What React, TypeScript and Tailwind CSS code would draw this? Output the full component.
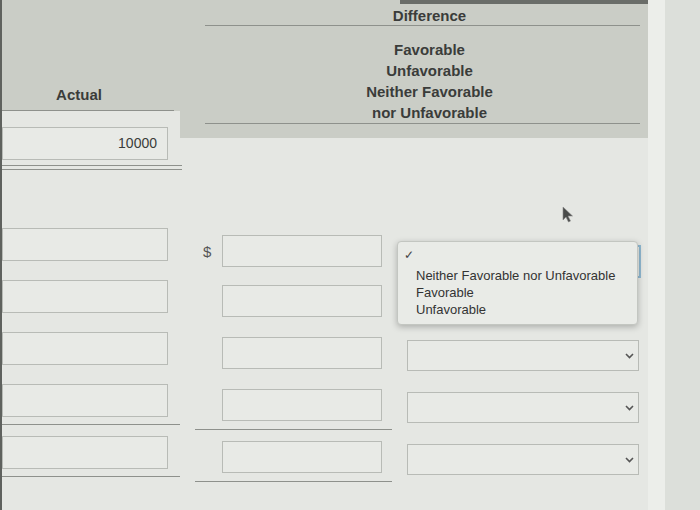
import React from 'react';

const font = { fontFamily: '"Liberation Sans", Arial, sans-serif' };

function Field({ w, h, className = '', children }: { w: string; h: string; className?: string; children?: React.ReactNode }) {
    return (
        <div className={`${w} ${h} ${className} border border-[#b8bbb6] bg-[#e8eae6] flex items-center justify-end pr-[10px] text-[14px] text-[#3a3c3a]`}>
            {children}
        </div>
    );
}

function Chevron() {
    return (
        <svg width="9" height="6" viewBox="0 0 9 6" className="mr-[4px]">
            <polyline points="1,1 4.5,4.5 8,1" fill="none" stroke="#555" strokeWidth="1.6" />
        </svg>
    );
}

function Row({ first, dollar, underline, select }: { first?: boolean; dollar?: boolean; underline?: boolean; select?: 'open' | 'closed' }) {
    return (
        <div className="flex h-[52px] items-start">
            <div className={`w-[178px] ${underline ? 'h-[41px] border-b border-[#8e918c]' : ''}`}>
                <Field w="w-[166px]" h="h-[33px]" />
            </div>
            <div className={`ml-[15px] w-[197px] flex items-start ${underline ? 'h-[46px] border-b border-[#8e918c]' : ''}`}>
                <div className="w-[27px] pt-[13px] pl-[8px] text-[15px] text-[#555]">{dollar ? '$' : ''}</div>
                <Field w="w-[160px]" h="h-[32px]" className={first ? 'mt-[7px]' : 'mt-[5px]'} />
            </div>
            {select === 'open' && (
                <div className="ml-[15px] mt-[17px] w-[234px] h-[33px] border-2 border-[#8fb8d0] bg-[#e8eae6]" />
            )}
            {select === 'closed' && (
                <div className="ml-[15px] mt-[8px] w-[232px] h-[31px] border border-[#b8bbb6] bg-[#e8eae6] flex items-center justify-end">
                    <Chevron />
                </div>
            )}
        </div>
    );
}

export default function App() {
    return (
        <div className="relative w-[700px] h-[510px] flex bg-[#e5e7e3] overflow-hidden" style={font}>
            <div className="w-[648px] h-full flex flex-col border-l-2 border-[#5f625e]">
                <div className="flex items-start">
                    <div className="w-[178px] flex flex-col">
                        <div className="h-[111px] bg-[#cacdc6] flex items-end">
                            <div className="w-[172px] border-b border-[#8e918c] pb-[6px] pr-[18px] text-center text-[15px] font-bold leading-[18px] text-[#3a3c3a]">
                                Actual
                            </div>
                        </div>
                        <div className="mt-[16px]">
                            <Field w="w-[166px]" h="h-[33px]">10000</Field>
                        </div>
                        <div className="mt-[5px] w-[180px] h-[5px] border-y border-[#8e918c]" />
                    </div>
                    <div className="flex-1 h-[138px] bg-[#cacdc6] flex flex-col pl-[25px] pr-[8px]">
                        <div className="h-[4px] ml-auto -mr-[8px] w-[248px] bg-[#6a6d69]" />
                        <div className="mt-[2px] h-[20px] border-b border-[#8e918c] text-center text-[15px] font-bold leading-[20px] text-[#3a3c3a] pl-[14px]">
                            Difference
                        </div>
                        <div className="pt-[13px] border-b border-[#8e918c] text-center text-[15px] font-bold leading-[21px] text-[#3a3c3a] pl-[14px]">
                            <div>Favorable</div>
                            <div>Unfavorable</div>
                            <div>Neither Favorable</div>
                            <div>nor Unfavorable</div>
                        </div>
                    </div>
                </div>
                <div className="mt-[58px] flex flex-col">
                    <Row first dollar select="open" />
                    <Row />
                    <Row select="closed" />
                    <Row underline select="closed" />
                    <Row underline select="closed" />
                </div>
            </div>
            <div className="w-[17px] h-full bg-[#eceeea]" />
            <div className="flex-1 h-full bg-[#dcdfda]" />

            <svg className="absolute left-[561px] top-[206px]" width="14" height="18" viewBox="0 0 14 18">
                <path d="M2 1 L2 14 L5 11 L7.5 16 L9.5 15 L7 10 L11.5 10 Z" fill="#4a4c4a" stroke="#888" strokeWidth="0.6" />
            </svg>

            <div className="absolute left-[397px] top-[241px] w-[241px] h-[84px] bg-[#e9ebe7] border border-[#c3c6c1] rounded-[4px] shadow-[0_2px_6px_rgba(0,0,0,0.25)] text-[13px] text-[#333] leading-[17px]">
                <div className="pl-[6px] pt-[5px] h-[22px] text-[12px] text-[#444]">✓</div>
                <div className="pl-[18px] pt-[3px]">
                    <div>Neither Favorable nor Unfavorable</div>
                    <div>Favorable</div>
                    <div>Unfavorable</div>
                </div>
            </div>
        </div>
    );
}
